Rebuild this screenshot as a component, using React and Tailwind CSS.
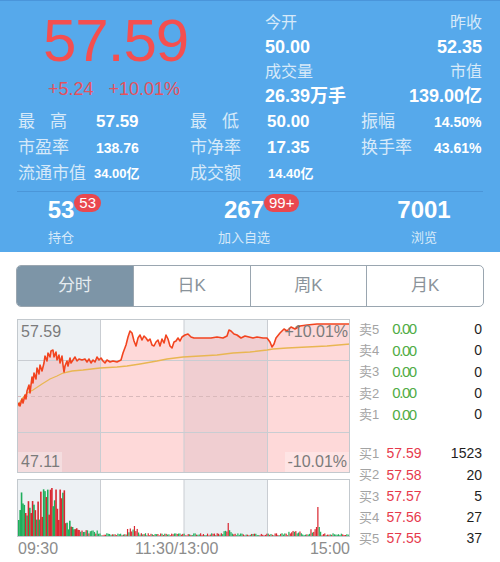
import React from "react";

const pricePts = [
  [0,88],[2,84],[3,87],[5,80],[6,84],[8,76],[9,80],[10,72],[12,66],[13,74],[15,58],[16,64],[17,54],[19,60],[20,49],[22,55],[23,46],[25,52],[27,44],[28,37],[30,42],[31,34],[33,38],[34,32],[36,31],[37,38],[39,33],[40,41],[42,36],[43,44],[45,37],[46,46],[47,53],[48,47],[50,42],[51,47],[53,39],[54,44],[56,41],[58,38],[60,42],[62,40],[65,41],[68,40],[70,43],[72,40],[74,44],[76,41],[78,43],[80,38],[82,41],[84,39],[86,42],[88,44],[90,41],[93,43],[96,42],[100,43],[104,41],[106,34],[109,26],[111,18],[113,12],[115,14],[117,22],[119,27],[121,19],[123,16],[125,21],[127,17],[129,19],[131,22],[133,20],[135,26],[137,27],[139,23],[141,21],[143,27],[145,20],[147,24],[149,16],[151,20],[153,27],[155,29],[157,23],[159,22],[161,19],[163,22],[165,18],[168,16],[171,15],[174,18],[177,19],[182,19],[188,19],[194,19],[200,18],[206,19],[210,17],[212,11],[214,12],[217,15],[220,16],[224,19],[228,17],[232,18],[236,19],[240,18],[246,19],[250,19],[253,23],[255,28],[257,25],[259,19],[263,14],[267,10],[270,12],[274,8],[278,10],[283,7],[290,6],[300,5],[315,5],[333,5]
];
const avgPts = [
  [0,88],[5,80],[10,74],[16,71],[25,65],[33,60],[40,57],[46,54],[55,52],[66,51],[83,49],[100,48],[110,47],[123,45],[140,42],[150,40],[166,38],[183,37],[200,36],[216,34],[233,33],[250,31],[256,30],[270,29],[290,28],[310,27],[333,25]
];
const toPath = (pts) => pts.map((p, i) => (i === 0 ? "M" : "L") + p[0] + "," + p[1]).join(" ");
const pricePath = toPath(pricePts);
const fillPath = pricePath + " L333,154 L0,154 Z";
const avgPath = toPath(avgPts);

function makeRng(seed) {
  let s = seed;
  return () => {
    s = (s * 16807) % 2147483647;
    return (s - 1) / 2147483646;
  };
}
const rand = makeRng(11);
const N = 240;
const vols = [];
for (let i = 0; i < N; i++) {
  let h;
  if (i < 34) h = 16 + rand() * 32;
  else if (i < 44) h = 4 + rand() * 16 * ((44 - i) / 10) + 2;
  else if (i < 58) h = 2 + rand() * 4;
  else h = 0.6 + rand() * 2.2;
  if (i >= 79 && i <= 87) h = 2 + rand() * 6;
  if (i === 84) h = 10;
  if (i >= 149 && i <= 154) h = 2 + rand() * 4;
  if (i === 152) h = 13;
  if (i >= 196 && i <= 204) h = 2 + rand() * 4;
  if (i >= 212 && i <= 219) h = 3 + rand() * 5;
  if (i === 216 || i === 218) h = 9;
  if (i === 217) h = 29;
  let up = rand() > 0.5;
  if (i === 217 || i === 152 || i === 84) up = true;
  vols.push({ h, up });
}

function PriceChart() {
  return (
    <div className="relative w-[333px] h-[154px]">
      <svg width="333" height="154" className="block">
        <rect x="0" y="0" width="333" height="154" fill="#ffffff" />
        <rect x="0" y="0" width="83.5" height="154" fill="#edf1f4" />
        <rect x="167" y="0" width="83" height="154" fill="#edf1f4" />
        <path d={fillPath} fill="rgba(250,110,110,0.26)" />
        <line x1="0" y1="41.5" x2="333" y2="41.5" stroke="#c9cdd2" strokeWidth="1" />
        <line x1="0" y1="77.5" x2="333" y2="77.5" stroke="#d9b9bb" strokeWidth="1" strokeDasharray="4 3" />
        <line x1="0" y1="113.5" x2="333" y2="113.5" stroke="#c9cdd2" strokeWidth="1" />
        <line x1="83.5" y1="0" x2="83.5" y2="154" stroke="#c9cdd2" strokeWidth="1" />
        <line x1="167" y1="0" x2="167" y2="154" stroke="#c9cdd2" strokeWidth="1" />
        <line x1="250.5" y1="0" x2="250.5" y2="154" stroke="#c9cdd2" strokeWidth="1" />
        <path d={avgPath} fill="none" stroke="#e9b652" strokeWidth="1.3" />
        <path d={pricePath} fill="none" stroke="#f2441f" strokeWidth="1.6" strokeLinejoin="round" />
        <rect x="0.5" y="0.5" width="332" height="153" fill="none" stroke="#c3c9ce" strokeWidth="1" />
      </svg>
      <span className="absolute left-[4px] top-[3px] text-[16px] leading-[20px] text-[#7b7b7b]">57.59</span>
      <span className="absolute right-[2px] top-[3px] text-[16px] leading-[20px] text-[#7b7b7b]">+10.01%</span>
      <span className="absolute left-[1px] bottom-[1px] pl-[3px] pr-[2px] bg-white/30 text-[16px] leading-[20px] text-[#7b7b7b]">47.11</span>
      <span className="absolute right-[1px] bottom-[1px] pl-[2px] pr-[2px] bg-white/30 text-[16px] leading-[20px] text-[#7b7b7b]">-10.01%</span>
    </div>
  );
}

function VolumeChart() {
  const step = 331 / N;
  return (
    <svg width="333" height="58" className="block">
      <rect x="0" y="0" width="333" height="58" fill="#ffffff" />
      <rect x="0" y="0" width="83.5" height="58" fill="#edf1f4" />
      <rect x="167" y="0" width="83" height="58" fill="#edf1f4" />
      <line x1="83.5" y1="0" x2="83.5" y2="58" stroke="#c9cdd2" strokeWidth="1" />
      <line x1="167" y1="0" x2="167" y2="58" stroke="#c9cdd2" strokeWidth="1" />
      <line x1="250.5" y1="0" x2="250.5" y2="58" stroke="#c9cdd2" strokeWidth="1" />
      {vols.map((v, i) => (
        <rect
          key={i}
          x={1 + i * step}
          y={57 - v.h}
          width={i < 44 ? 1.6 : 1.2}
          height={v.h}
          fill={v.up ? "#d9262f" : "#1fae5b"}
        />
      ))}
      <rect x="0.5" y="0.5" width="332" height="57" fill="none" stroke="#c3c9ce" strokeWidth="1" />
    </svg>
  );
}

const sells = [
  ["卖5", "0.00", "0"],
  ["卖4", "0.00", "0"],
  ["卖3", "0.00", "0"],
  ["卖2", "0.00", "0"],
  ["卖1", "0.00", "0"],
];
const buys = [
  ["买1", "57.59", "1523"],
  ["买2", "57.58", "20"],
  ["买3", "57.57", "5"],
  ["买4", "57.56", "27"],
  ["买5", "57.55", "37"],
];

function BookRow({ label, price, qty, color, tight }) {
  return (
    <div className="flex items-center h-[21.3px]">
      <span className="w-[28px] pl-[2px] text-[13px] text-[#a3a3a3]">{label}</span>
      <span className={"w-[38px] text-center " + color + (tight ? " text-[15px] tracking-[-1.4px]" : " text-[14px]")}>{price}</span>
      <span className="flex-1 text-right text-[14px] text-[#1e1e1e]">{qty}</span>
    </div>
  );
}

export default function App() {
  return (
    <div className="w-[500px] h-[562px] overflow-hidden bg-white font-['Liberation_Sans','Noto_Sans_CJK_SC',sans-serif]">
      <div className="h-[252px] bg-[#56a9eb] border-t border-[#4a95da]">
        <div className="flex h-[108px]">
          <div className="w-[265px] pl-[43px] pt-[10px]">
            <div className="text-[60px] leading-[60px] tracking-[-1px] text-[#f44f50]">57.59</div>
            <div className="mt-[9px] ml-[5px] flex gap-[15px] text-[18px] leading-[18px] text-[#e4525e]">
              <span>+5.24</span>
              <span>+10.01%</span>
            </div>
          </div>
          <div className="flex-1 pr-[18px] pt-[10px] flex justify-between">
            <div className="flex flex-col">
              <span className="h-[24px] leading-[24px] text-[16px] text-[#d6e9f9]">今开</span>
              <span className="h-[24px] leading-[24px] text-[18px] font-bold text-white">50.00</span>
              <span className="h-[24px] leading-[24px] text-[16px] text-[#d6e9f9] mt-[1px]">成交量</span>
              <span className="h-[24px] leading-[24px] text-[18px] font-bold text-white">26.39万手</span>
            </div>
            <div className="flex flex-col items-end">
              <span className="h-[24px] leading-[24px] text-[16px] text-[#d6e9f9]">昨收</span>
              <span className="h-[24px] leading-[24px] text-[18px] font-bold text-white">52.35</span>
              <span className="h-[24px] leading-[24px] text-[16px] text-[#d6e9f9] mt-[1px]">市值</span>
              <span className="h-[24px] leading-[24px] text-[18px] font-bold text-white">139.00亿</span>
            </div>
          </div>
        </div>

        <div className="pl-[18px] grid grid-cols-[172px_171px_1fr]">
          <div className="h-[26px] flex items-center">
            <span className="w-[78px] flex text-[17px] text-[#d6e9f9]"><span>最</span><span className="ml-[15px]">高</span></span>
            <span className="text-[17px] font-bold text-white">57.59</span>
          </div>
          <div className="h-[26px] flex items-center">
            <span className="w-[77px] flex text-[17px] text-[#d6e9f9]"><span>最</span><span className="ml-[15px]">低</span></span>
            <span className="text-[17px] font-bold text-white">50.00</span>
          </div>
          <div className="h-[26px] flex items-center">
            <span className="w-[73px] text-[17px] text-[#d6e9f9]">振幅</span>
            <span className="text-[14px] font-bold text-white">14.50%</span>
          </div>

          <div className="h-[26px] flex items-center">
            <span className="w-[78px] text-[17px] text-[#d6e9f9]">市盈率</span>
            <span className="text-[14px] font-bold text-white">138.76</span>
          </div>
          <div className="h-[26px] flex items-center">
            <span className="w-[77px] text-[17px] text-[#d6e9f9]">市净率</span>
            <span className="text-[17px] font-bold text-white">17.35</span>
          </div>
          <div className="h-[26px] flex items-center">
            <span className="w-[73px] text-[17px] text-[#d6e9f9]">换手率</span>
            <span className="text-[14px] font-bold text-white">43.61%</span>
          </div>

          <div className="h-[26px] flex items-center">
            <span className="w-[76px] text-[17px] text-[#d6e9f9]">流通市值</span>
            <span className="text-[13px] font-bold text-white">34.00亿</span>
          </div>
          <div className="h-[26px] flex items-center">
            <span className="w-[78px] text-[17px] text-[#d6e9f9]">成交额</span>
            <span className="text-[13px] font-bold text-white">14.40亿</span>
          </div>
          <div className="h-[26px]"></div>
        </div>

        <div className="mt-[4px] mx-[17px] h-px bg-[#4b96d8]"></div>

        <div className="grid grid-cols-[122px_244px_116px]">
          <div className="flex flex-col items-center">
            <span className="relative mt-[6px] text-[24px] leading-[24px] font-bold text-white">
              53
              <span className="absolute left-full top-[-4px] h-[18px] px-[5px] rounded-full bg-[#e9484f] text-[15px] leading-[18px] font-normal text-white">53</span>
            </span>
            <span className="mt-[8px] text-[13px] leading-[16px] text-[#d6e9f9]">持仓</span>
          </div>
          <div className="flex flex-col items-center">
            <span className="relative mt-[6px] text-[24px] leading-[24px] font-bold text-white">
              267
              <span className="absolute left-full top-[-4px] h-[18px] px-[5px] rounded-full bg-[#e9484f] text-[15px] leading-[18px] font-normal text-white">99+</span>
            </span>
            <span className="mt-[8px] text-[13px] leading-[16px] text-[#d6e9f9]">加入自选</span>
          </div>
          <div className="flex flex-col items-center">
            <span className="mt-[6px] text-[24px] leading-[24px] font-bold text-white">7001</span>
            <span className="mt-[8px] text-[13px] leading-[16px] text-[#d6e9f9]">浏览</span>
          </div>
        </div>
      </div>

      <div className="mt-[13px] ml-[16px] w-[468px] h-[42px] flex rounded-[5px] border border-[#9aa6b0] overflow-hidden">
        <div className="flex-1 flex items-center justify-center bg-[#7d95a7] text-[17px] text-[#e6ecf0]">分时</div>
        <div className="flex-1 flex items-center justify-center border-l border-[#9aa6b0] text-[17px] text-[#8a939a]">日K</div>
        <div className="flex-1 flex items-center justify-center border-l border-[#9aa6b0] text-[17px] text-[#8a939a]">周K</div>
        <div className="flex-1 flex items-center justify-center border-l border-[#9aa6b0] text-[17px] text-[#8a939a]">月K</div>
      </div>

      <div className="flex mt-[12px]">
        <div className="ml-[17px] w-[333px] flex flex-col">
          <PriceChart />
          <div className="mt-[6px]">
            <VolumeChart />
          </div>
          <div className="mt-[2px] relative h-[20px] text-[16px] leading-[20px] text-[#8c8c8c]">
            <span className="absolute left-[1px] top-0">09:30</span>
            <span className="absolute left-[118px] top-0">11:30/13:00</span>
            <span className="absolute right-0 top-0">15:00</span>
          </div>
        </div>
        <div className="ml-[7px] w-[125px] flex flex-col">
          {sells.map((r) => (
            <BookRow key={r[0]} label={r[0]} price={r[1]} qty={r[2]} color="text-[#4fac45]" tight />
          ))}
          <div className="h-[17.6px]"></div>
          {buys.map((r) => (
            <BookRow key={r[0]} label={r[0]} price={r[1]} qty={r[2]} color="text-[#e63a4c]" />
          ))}
        </div>
      </div>
    </div>
  );
}
